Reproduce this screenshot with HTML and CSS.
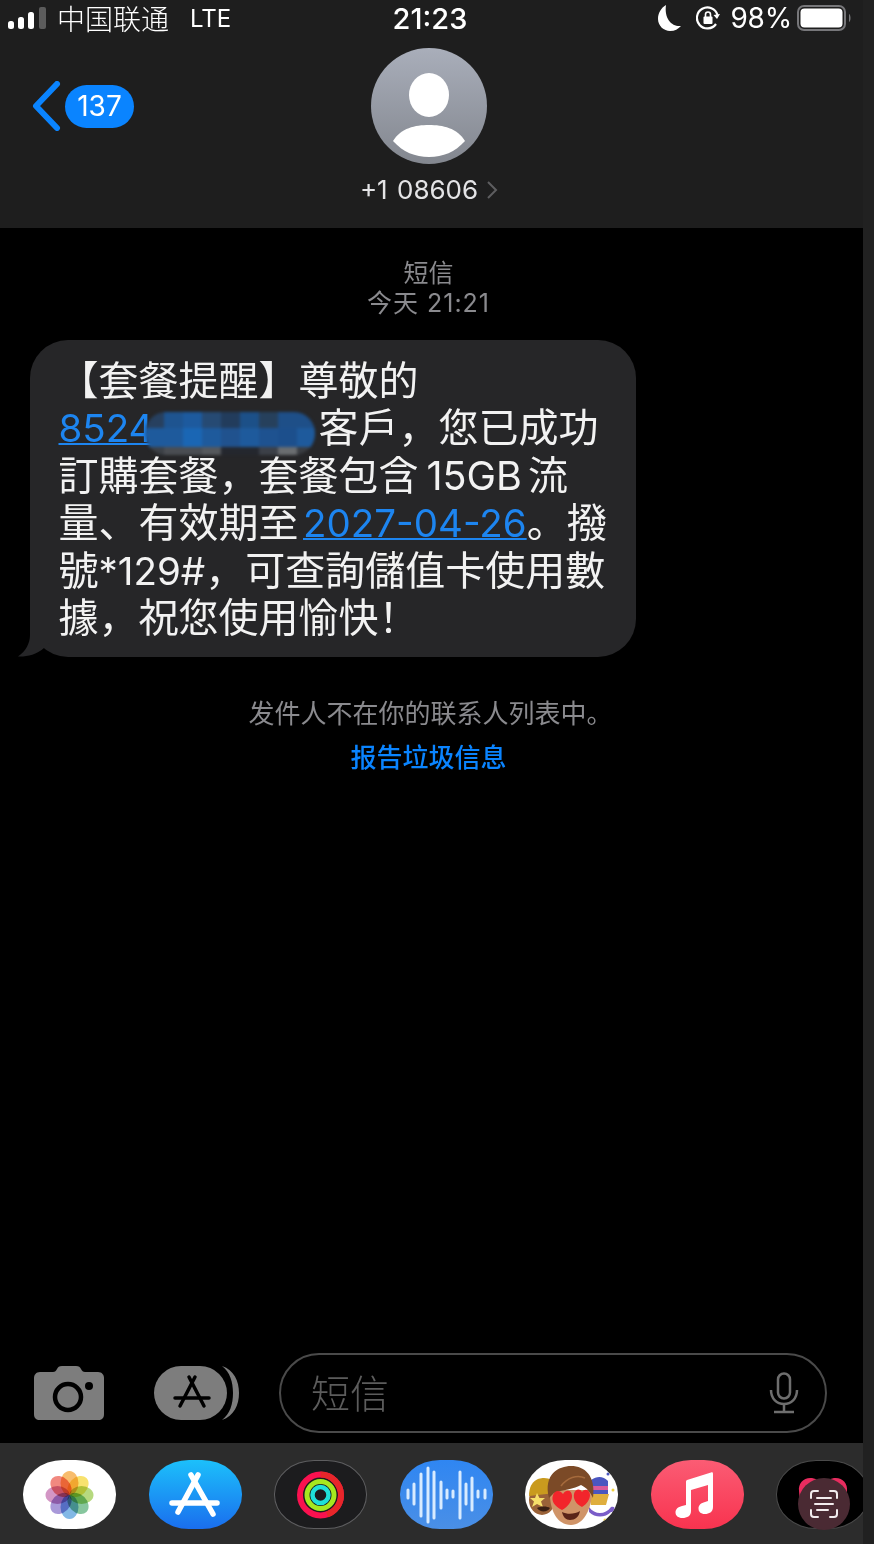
FILE: index.html
```html
<!DOCTYPE html>
<html lang="zh">
<head>
  <meta charset="UTF-8" />
  <meta name="viewport" content="width=device-width, initial-scale=1.0"/>
  <title>短信</title>
  <link rel="stylesheet" href="styles.css">
</head>
<body>
  <div class="screen">
    <header class="top">
      <div class="status">
        <div class="status-left">
          <svg class="signal" width="38" height="22" viewBox="0 0 38 22">
            <rect x="0" y="14" width="6" height="8" rx="2.5" fill="#fff"/>
            <rect x="10" y="10" width="6" height="12" rx="2.5" fill="#fff"/>
            <rect x="20" y="5" width="6" height="17" rx="2.5" fill="#fff"/>
            <rect x="31" y="0" width="7" height="22" rx="2" fill="#5c5c5c"/>
          </svg>
          <span class="carrier">中国联通</span>
          <span class="net">LTE</span>
        </div>
        <div class="clock">21:23</div>
        <div class="status-right">
          <svg width="23" height="26" viewBox="0 0 23 26"><path d="M8 0 C3 3 0 8 0 14 C0 21 6 26 12 26 C17 26 20 24 23 21 C14 22 6 14 8 0 Z" fill="#fff"/></svg>
          <svg class="lock" width="24" height="24" viewBox="0 0 24 24" fill="none" stroke="#fff" stroke-width="2.2"><path d="M20 18 A10.5 10.5 0 1 1 21.500 9"/><path d="M24 8 L21 13 L17.500 9" fill="#fff" stroke="none"/><rect x="7.500" y="10.500" width="9" height="7.500" rx="1" fill="#fff" stroke="none"/><path d="M9.500 11 V8.500 A2.500 2.500 0 0 1 14.500 8.500 V11" stroke-width="1.600"/></svg>
          <span class="batt-num">98%</span>
          <svg class="battery" width="55" height="26" viewBox="0 0 55 26">
            <rect x="1" y="1" width="47" height="24" rx="6" fill="none" stroke="#77777a" stroke-width="2"/>
            <rect x="3.500" y="3.500" width="42" height="19" rx="4" fill="#fff"/>
            <path d="M52 9 C54 10 54 16 52 17 Z" fill="#77777a"/>
          </svg>
        </div>
      </div>
      <nav class="nav">
        <a class="back">
          <svg width="30" height="50" viewBox="0 0 30 50" fill="none"><path d="M26 3 L5 25 L26 47" stroke="#0a84ff" stroke-width="6" stroke-linecap="round" stroke-linejoin="round"/></svg>
          <span class="badge">137</span>
        </a>
        <div class="contact">
          <svg class="avatar" width="116" height="116" viewBox="0 0 116 116">
            <defs><linearGradient id="av" x1="0" y1="0" x2="0" y2="1"><stop offset="0" stop-color="#a9aeba"/><stop offset="1" stop-color="#83878f"/></linearGradient></defs>
            <circle cx="58" cy="58" r="58" fill="url(#av)"/>
            <ellipse cx="58" cy="47" rx="20" ry="22" fill="#fff"/>
            <path d="M22 93 C30 80 44 77 58 77 C72 77 86 80 94 93 C84 104 72 109 58 109 C44 109 32 104 22 93 Z" fill="#fff"/>
          </svg>
          <div class="contact-name">+1 08606
            <svg width="12" height="20" viewBox="0 0 12 20" fill="none"><path d="M2 2 L10 10 L2 18" stroke="#5e5e60" stroke-width="2"/></svg>
          </div>
        </div>
      </nav>
    </header>

    <main class="thread">
      <div class="stamp">
        <p>短信</p>
        <p class="stamp-time">今天&nbsp;21:21</p>
      </div>

      <div class="bubble">
        <p class="msg" lang="ja">【套餐提醒】尊敬的<br><span class="masked"><a class="lnk num">8524<span class="hidden-num"></span></a><svg class="blur" width="170" height="43" viewBox="0 0 170 43">
          <defs><clipPath id="pill"><rect width="170" height="43" rx="21"/></clipPath></defs>
          <g clip-path="url(#pill)">
            <rect x="0" y="0" width="20" height="16" fill="#27405f"/>
            <rect x="19" y="0" width="20" height="16" fill="#1e5490"/>
            <rect x="38" y="0" width="20" height="16" fill="#1d5a9e"/>
            <rect x="57" y="0" width="20" height="16" fill="#264a73"/>
            <rect x="76" y="0" width="20" height="16" fill="#223c5c"/>
            <rect x="95" y="0" width="20" height="16" fill="#1c5088"/>
            <rect x="114" y="0" width="20" height="16" fill="#26405c"/>
            <rect x="133" y="0" width="20" height="16" fill="#1e4f88"/>
            <rect x="152" y="0" width="20" height="16" fill="#1e4f88"/>
            <rect x="0" y="16" width="20" height="19" fill="#1e5a9c"/>
            <rect x="19" y="16" width="20" height="19" fill="#1e5a9c"/>
            <rect x="38" y="16" width="20" height="19" fill="#1a66b4"/>
            <rect x="57" y="16" width="20" height="19" fill="#1e5a9c"/>
            <rect x="76" y="16" width="20" height="19" fill="#20528e"/>
            <rect x="95" y="16" width="20" height="19" fill="#1e5a9c"/>
            <rect x="114" y="16" width="20" height="19" fill="#1e5290"/>
            <rect x="133" y="16" width="20" height="19" fill="#1c4f8c"/>
            <rect x="152" y="16" width="20" height="19" fill="#1e5a9c"/>
            <rect x="0" y="35" width="20" height="9" fill="#3c4046"/>
            <rect x="19" y="35" width="20" height="9" fill="#4a4d52"/>
            <rect x="38" y="35" width="20" height="9" fill="#4a4d52"/>
            <rect x="57" y="35" width="20" height="9" fill="#55585c"/>
            <rect x="76" y="35" width="20" height="9" fill="#24272e"/>
            <rect x="95" y="35" width="20" height="9" fill="#24272e"/>
            <rect x="114" y="35" width="20" height="9" fill="#3c4048"/>
            <rect x="133" y="35" width="20" height="9" fill="#6a6d70"/>
            <rect x="152" y="35" width="20" height="9" fill="#3a3d42"/>
          </g>
        </svg></span>客戶，您已成功<br>訂購套餐，套餐包含<span class="num gb">15GB</span>流<br>量、有效期至<a class="lnk num date">2027-04-26</a>。撥<br>號<span class="num">*129#</span>，可查詢儲值卡使用數<br>據，祝您使用愉快<span class="bang">！</span></p>
        <svg class="tail" width="40" height="40" viewBox="0 0 40 40"><path d="M12 0 V18 C12 26 8 34 0 39.500 C8 40 18 38 26 31 L40 18 L40 0 Z" fill="#262628"/></svg>
      </div>

      <div class="notice">
        <p>发件人不在你的联系人列表中。</p>
        <a class="report">报告垃圾信息</a>
      </div>
    </main>

    <section class="compose">
      <svg class="camera" width="70" height="54" viewBox="0 0 70 54">
        <path d="M6 6 H19 C21 6 22 5 23 3 C24 1 25 0 28 0 H42 C45 0 46 1 47 3 C48 5 49 6 51 6 H64 C68 6 70 9 70 12 V48 C70 52 68 54 64 54 H6 C2 54 0 52 0 48 V12 C0 9 2 6 6 6 Z" fill="#7d7d7d"/>
        <ellipse cx="34" cy="31" rx="13" ry="13" fill="none" stroke="#000" stroke-width="4.500"/>
        <circle cx="55" cy="20" r="4" fill="#000"/>
      </svg>
      <svg class="apps" width="86" height="54" viewBox="0 0 86 54">
        <path d="M68 0 C80 4 85 15 85 27 C85 39 80 50 68 54 C76 48 79 38 79 27 C79 16 76 6 68 0 Z" fill="#7d7d7d"/>
        <rect width="73" height="54" rx="27" fill="#7d7d7d"/>
        <g stroke="#000" stroke-width="3.500" stroke-linecap="round"><path d="M41 11 L26 40"/><path d="M35 11 L50 40"/><path d="M21 32 L55 32"/></g>
      </svg>
      <div class="input">
        <span class="placeholder">短信</span>
        <svg width="30" height="42" viewBox="0 0 30 42" fill="none" stroke="#6e6e6e" stroke-width="2.500"><rect x="9" y="1.500" width="12" height="25" rx="6"/><path d="M2 18 C2 27 8 32 15 32 C22 32 28 27 28 18"/><path d="M15 32 V40 M5 40 H25"/></svg>
      </div>
    </section>

    <footer class="dock">
      <div class="app app-photos">
        <svg width="93" height="69" viewBox="0 0 93 69">
          <g class="petals">
            <ellipse cx="46.500" cy="23" rx="9" ry="12" fill="#f59a1f"/>
            <ellipse cx="46.500" cy="23" rx="9" ry="12" fill="#f5d21f" transform="rotate(45 46.500 35)"/>
            <ellipse cx="46.500" cy="23" rx="9" ry="12" fill="#8fc43a" transform="rotate(90 46.500 35)"/>
            <ellipse cx="46.500" cy="23" rx="9" ry="12" fill="#46a86a" transform="rotate(135 46.500 35)"/>
            <ellipse cx="46.500" cy="23" rx="9" ry="12" fill="#3f92d8" transform="rotate(180 46.500 35)"/>
            <ellipse cx="46.500" cy="23" rx="9" ry="12" fill="#7a62c4" transform="rotate(225 46.500 35)"/>
            <ellipse cx="46.500" cy="23" rx="9" ry="12" fill="#bc5ea6" transform="rotate(270 46.500 35)"/>
            <ellipse cx="46.500" cy="23" rx="9" ry="12" fill="#ea4a3c" transform="rotate(315 46.500 35)"/>
          </g>
        </svg>
      </div>
      <div class="app app-store">
        <svg width="93" height="69" viewBox="0 0 93 69">
          <g stroke="#fff" stroke-width="5.500" stroke-linecap="round"><path d="M49 15 L29 52"/><path d="M42 15 L64 54"/><path d="M23 43 L68 43"/></g>
        </svg>
      </div>
      <div class="app app-activity">
        <svg width="91" height="67" viewBox="0 0 91 67" fill="none">
          <circle cx="45.500" cy="34" r="20.500" stroke="#fa114f" stroke-width="6"/>
          <path d="M45.500 13.500 A20.500 20.500 0 0 1 66 34 A20.500 20.500 0 0 1 52 53.500" stroke="#e8262a" stroke-width="6"/>
          <circle cx="45.500" cy="34" r="13.500" stroke="#a6e81f" stroke-width="5"/>
          <circle cx="45.500" cy="34" r="8" stroke="#1fe0d8" stroke-width="4.500"/>
        </svg>
      </div>
      <div class="app app-voice">
        <svg width="93" height="69" viewBox="0 0 93 69" stroke="#d8ebff" stroke-width="3" stroke-linecap="round">
          <path d="M8 30 V38 M14 24 V44 M21 14 V56 M28 8 V62 M34 12 V58 M41 22 V48 M47 30 V38 M53 31 V37 M60 12 V58 M66 24 V44 M72 18 V50 M78 31 V37 M85 30 V38"/>
        </svg>
      </div>
      <div class="app app-memoji">
        <svg width="93" height="69" viewBox="0 0 93 69">
          <path d="M66 20 C72 16 78 16 83 21 L83 34 L66 34 Z" fill="#4a56c0"/>
          <rect x="66" y="26" width="17" height="4" fill="#d85a9a"/>
          <path d="M64 34 L84 34 L81 45 L66 45 Z" fill="#dfae3e"/>
          <path d="M64 47 C70 55 80 55 86 47 C91 45 91 52 86 52 C80 58 70 58 64 52 Z" fill="#7a5dc8"/>
          <circle cx="83" cy="14" r="1.500" fill="#4a56c0"/>
          <circle cx="88" cy="30" r="1.500" fill="#f0d040"/>
          <circle cx="80" cy="60" r="1.500" fill="#f0d040"/>
          <ellipse cx="17" cy="40" rx="13" ry="15" fill="#9a6238"/>
          <path d="M4 36 C4 22 12 18 19 18 C25 18 29 21 30 27 L30 33 L4 36 Z" fill="#c99a1e"/>
          <path d="M12 33 L14.500 38 L20 38 L16 41.500 L18 47 L12 44 L7 47 L9 41.500 L5 38 L10 38 Z" fill="#f6de6a"/>
          <path d="M12 48 C16 46 22 46 25 48 C23 52 15 53 12 48 Z" fill="#3a2014"/>
          <path d="M25 30 C24 50 32 65 46 65 C58 65 67 50 67 30 Z" fill="#d09468"/>
          <path d="M24 38 C18 14 34 6 46 6 C60 6 71 16 68 38 C65 32 62 28 56 25 C50 29 36 30 29 33 Z" fill="#7b4a27"/>
          <path d="M36 26 C42 18 52 14 60 18" stroke="#a56a3c" stroke-width="1.500" fill="none"/>
          <path d="M37 50 C29 46 26 41 28 35 C30 30 35 30 38 34 C41 29 47 30 47 36 C47 41 43 47 37 50 Z" fill="#f2252b"/>
          <path d="M57 47 C51 44 48 39 49 34 C50 29 55 28 57 32 C60 28 65 30 65 35 C65 39 62 44 57 47 Z" fill="#f2252b"/>
          <path d="M37 52 C43 55 50 54 55 51 C54 57 50 60 45 60 C41 60 38 57 37 52 Z" fill="#5a2418"/>
        </svg>
      </div>
      <div class="app app-music">
        <svg width="93" height="69" viewBox="0 0 93 69">
          <path d="M36 20 L60 12.500 C61.500 12 62 12.500 62 14 V47 C62 52 58 54 54 54 C49.500 54 47.500 51.500 47.500 48.500 C47.500 45 50 43 54 42 L57 41 V25 L40 30 V51 C40 56 36 58 31.500 58 C27 58 24.500 55.500 24.500 52.500 C24.500 49 27 47 31 46 L35 45 V22 C35 21 35.500 20.300 36 20 Z" fill="#fff"/>
        </svg>
      </div>
      <div class="app app-clock">
        <svg width="91" height="67" viewBox="0 0 91 67"><path d="M22 30 C21 22 27 16 35 17 C40 18 44 21 46 25 L23 42 Z M70 30 C71 22 65 16 57 17 C52 18 48 21 46 25 L69 42 Z" fill="#e82c5f"/></svg>
      </div>
      <button class="scan">
        <svg width="28" height="28" viewBox="0 0 28 28" fill="none" stroke="#f2ecee" stroke-width="2" stroke-linecap="round"><path d="M1 8 V4 C1 2 2 1 4 1 H8 M20 1 H24 C26 1 27 2 27 4 V8 M27 20 V24 C27 26 26 27 24 27 H20 M8 27 H4 C2 27 1 26 1 24 V20"/><path d="M7 8 H21 M5 14 H23 M7 20 H18"/></svg>
      </button>
    </footer>
  </div>
  <div class="edge"></div>
</body>
</html>
```

FILE: styles.css
```css
* {
  box-sizing: border-box;
}
html, body {
  height: 100%;
}
body {
  margin: 0;
  display: flex;
  background-color: #000;
  color: #fff;
  font-family: Inter, "Noto Sans CJK SC", sans-serif;
  overflow: hidden;
}
p {
  margin: 0;
}
.screen {
  width: 863px;
  height: 1544px;
  display: flex;
  flex-direction: column;
}
.edge {
  width: 11px;
  background-color: #212121;
}

/* barra superior */
.top {
  height: 228px;
  background-color: #1e1e1e;
}
.status {
  height: 36px;
  padding: 0 11px 0 8px;
  display: grid;
  grid-template-columns: 1fr auto 1fr;
  align-items: center;
}
.status-left {
  display: flex;
  align-items: center;
}
.carrier {
  margin-left: 11px;
  font-size: 28px;
  line-height: 36px;
  font-family: "Noto Sans CJK SC", sans-serif;
  font-weight: 300;
}
.net {
  margin-left: 21px;
  font-size: 24px;
}
.clock {
  font-size: 29px;
  font-weight: 500;
}
.status-right {
  display: flex;
  align-items: center;
  justify-content: flex-end;
}
.lock {
  margin-left: 15px;
}
.batt-num {
  margin-left: 10px;
  margin-right: 5px;
  font-size: 28px;
  letter-spacing: -0.2px;
}
.nav {
  position: relative;
  height: 192px;
  display: flex;
  justify-content: center;
}
.back {
  position: absolute;
  left: 31px;
  top: 45px;
  display: flex;
  align-items: center;
  gap: 4px;
}
.badge {
  width: 69px;
  height: 43px;
  border-radius: 22px;
  background-color: #0a84ff;
  font-size: 28px;
  line-height: 43px;
  text-align: center;
}
.contact {
  width: 136px;
  margin-left: -5px;
  padding-top: 12px;
  display: flex;
  flex-direction: column;
  align-items: center;
}
.avatar {
  display: block;
}
.contact-name {
  margin-top: 11px;
  display: flex;
  align-items: center;
  gap: 8px;
  font-size: 26px;
  line-height: 30px;
  white-space: nowrap;
  color: #e4e4e6;
  word-spacing: 2px;
}

/* conversacion */
.thread {
  flex: 1;
  padding-top: 30px;
}
.stamp {
  padding-right: 6px;
  text-align: center;
  font-size: 25px;
  line-height: 30px;
  color: #8a8a8e;
}
.stamp-time {
  letter-spacing: 1px;
}
.bubble {
  position: relative;
  width: 606px;
  height: 317px;
  margin: 22px 0 0 30px;
  padding: 17px 0 0 28.500px;
  border-radius: 38px;
  background-color: #262628;
}
.msg {
  font-size: 40px;
  line-height: 47.400px;
  white-space: nowrap;
  font-family: Inter, "Noto Sans CJK JP", sans-serif;
  color: #f2f2f2;
}
.num {
  font-size: 38.500px;
  line-height: 1;
}
.lnk {
  color: #1d85f0;
  text-decoration: underline;
  text-decoration-thickness: 2px;
}
.hidden-num {
  display: inline-block;
  width: 165px;
}
.masked {
  position: relative;
}
.blur {
  position: absolute;
  left: 86px;
  top: 9px;
  filter: blur(1.500px);
}
.gb {
  margin: 0 6px 0 8px;
  font-size: 39.500px;
}
.date {
  margin-left: 4.500px;
}
.bang {
  font-feature-settings: "palt";
}
.tail {
  position: absolute;
  left: -12px;
  bottom: 0;
}
.notice {
  margin-top: 35px;
  padding-right: 6px;
  text-align: center;
  font-size: 26px;
  line-height: 44px;
  color: #8a8a8e;
}
.notice p {
  padding-left: 4px;
}
.report {
  font-weight: 500;
  color: #0a84ff;
}

/* barra de entrada */
.compose {
  height: 90px;
  padding: 0 36px 10px 34px;
  display: flex;
  align-items: center;
}
.camera {
  flex: none;
}
.apps {
  flex: none;
  margin-left: 50px;
}
.input {
  flex: 1;
  height: 80px;
  margin-left: 39px;
  padding: 0 26px 4px 30px;
  display: flex;
  align-items: center;
  justify-content: space-between;
  border: 2px solid #4a4a4a;
  border-radius: 40px;
}
.input svg {
  margin-top: 4px;
}
.placeholder {
  font-size: 39px;
  font-family: "Noto Sans CJK SC", sans-serif;
  font-weight: 300;
  color: #5c5c5c;
}

/* dock */
.dock {
  position: relative;
  height: 101px;
  padding: 17px 0 0 23px;
  display: flex;
  gap: 32.500px;
  background-color: #2c2c2c;
  overflow: hidden;
}
.app {
  flex: none;
  width: 93px;
  height: 69px;
  border-radius: 40px / 34px;
  overflow: hidden;
}
.app svg {
  display: block;
}
.petals ellipse {
  mix-blend-mode: multiply;
  opacity: 0.65;
}
.app-photos {
  background-color: #fff;
}
.app-store {
  background: linear-gradient(#1cc0fb, #1a6eee);
}
.app-activity {
  background-color: #1c1c1e;
  border: 1px solid #5e5e60;
}
.app-voice {
  background: linear-gradient(#2f86f2, #4a8fe6);
}
.app-memoji {
  background-color: #fff;
}
.app-music {
  background: linear-gradient(#fb5c74, #f8334f);
}
.app-clock {
  background-color: #000;
  border: 1px solid #4a4a4a;
}
.scan {
  position: absolute;
  left: 798px;
  top: 35px;
  width: 52px;
  height: 52px;
  padding: 0;
  display: flex;
  align-items: center;
  justify-content: center;
  border: none;
  border-radius: 50%;
  background-color: #4a2a33;
}
```
